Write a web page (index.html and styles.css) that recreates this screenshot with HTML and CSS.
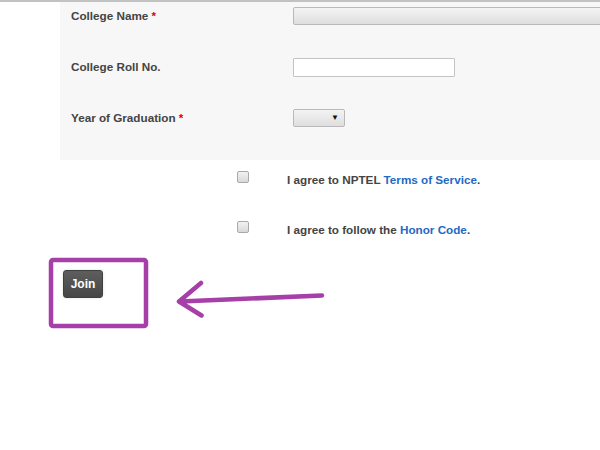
FILE: index.html
```html
<!DOCTYPE html>
<html>
<head>
<meta charset="utf-8">
<link rel="stylesheet" href="styles.css">
</head>
<body>
<div class="topline"></div>
<div class="panel">
  <div class="row">
    <label class="label">College Name <span class="req">*</span></label>
    <div class="field"><div class="select wide"></div></div>
  </div>
  <div class="row">
    <label class="label">College Roll No.</label>
    <div class="field"><div class="input"></div></div>
  </div>
  <div class="row last">
    <label class="label">Year of Graduation <span class="req">*</span></label>
    <div class="field"><div class="select year"><span class="caret">&#9660;</span></div></div>
  </div>
</div>
<div class="agree">
  <div class="check-row">
    <span class="checkbox"></span>
    <span class="check-text">I agree to NPTEL <a class="link">Terms of Service</a>.</span>
  </div>
  <div class="check-row">
    <span class="checkbox"></span>
    <span class="check-text">I agree to follow the <a class="link">Honor Code</a>.</span>
  </div>
</div>
<div class="actions">
  <button class="join">Join</button>
</div>
<svg class="annot" width="600" height="450" viewBox="0 0 600 450">
  <rect x="51" y="260" width="95" height="66" rx="2" ry="2" fill="none" stroke="#a63fa8" stroke-width="4.5"/>
  <path d="M322 295.5 L180 301.5 M201 283 L179 301.5 L201.5 315.5" fill="none" stroke="#a63fa8" stroke-width="4.5" stroke-linecap="round" stroke-linejoin="round"/>
</svg>
</body>
</html>
```

FILE: styles.css
```css
html, body {
  margin: 0;
  padding: 0;
  background: #ffffff;
  width: 600px;
  height: 450px;
  overflow: hidden;
  position: relative;
  font-family: "Liberation Sans", Arial, sans-serif;
  font-size: 11.7px;
  color: #444444;
}

.topline {
  height: 2px;
  background: #c2c2c2;
}

.panel {
  margin-left: 60px;
  background: #f7f7f7;
  padding: 5px 0 33px 11px;
  display: grid;
  grid-template-columns: 222px 1fr;
  grid-template-rows: 51px 51px 18px;
  overflow: hidden;
}

.row {
  display: contents;
}

.label {
  font-weight: bold;
  line-height: 16px;
  padding-top: 1px;
  color: #444444;
}

.req {
  color: #e00000;
}

.field {
  display: flex;
  align-items: flex-start;
  min-width: 0;
}

.select {
  box-sizing: border-box;
  height: 18px;
  border: 1px solid #b9b9b9;
  border-radius: 2px;
  background: linear-gradient(#f4f4f4, #dedede);
  display: flex;
  align-items: center;
  justify-content: flex-end;
}

.select.wide {
  width: calc(100% + 4px);
  flex: none;
}

.select.year {
  width: 52px;
  height: 18px;
  padding-right: 5px;
}

.caret {
  font-size: 8px;
  color: #111111;
  line-height: 8px;
}

.input {
  box-sizing: border-box;
  width: 162px;
  height: 19px;
  background: #ffffff;
  border: 1px solid #c4c4c4;
  border-radius: 1px;
}

.agree {
  padding-top: 11px;
  display: flex;
  flex-direction: column;
  gap: 34px;
}

.check-row {
  display: flex;
  align-items: flex-start;
  height: 16px;
  padding-left: 237px;
}

.checkbox {
  box-sizing: border-box;
  width: 12px;
  height: 12px;
  border: 1px solid #a9a9a9;
  border-radius: 2px;
  background: linear-gradient(#f2f2f2, #d8d8d8);
  margin-right: 38px;
  flex: none;
}

.check-text {
  font-weight: bold;
  line-height: 16px;
  margin-top: 1px;
  color: #444444;
}

.link {
  color: #2369c4;
  text-decoration: none;
}

.actions {
  padding: 33px 0 0 63px;
}

.join {
  box-sizing: border-box;
  width: 40px;
  height: 28px;
  border: 1px solid #3f3f3f;
  border-radius: 3px;
  background: linear-gradient(#5e5e5e, #464646);
  color: #ffffff;
  font-family: "Liberation Sans", Arial, sans-serif;
  font-weight: bold;
  font-size: 12px;
  padding: 0;
  display: block;
  box-shadow: 0 0 3px rgba(0, 0, 0, 0.12);
}

.annot {
  position: absolute;
  left: 0;
  top: 0;
  pointer-events: none;
}
```
